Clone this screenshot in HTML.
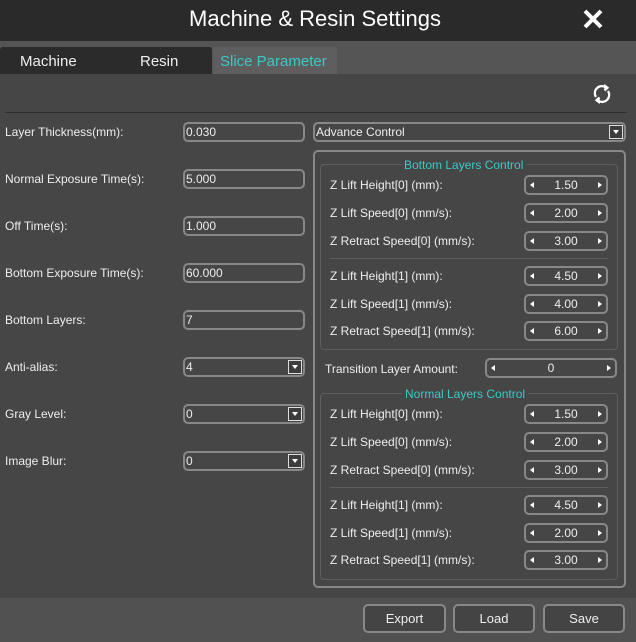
<!DOCTYPE html>
<html><head><meta charset="utf-8"><style>
*{margin:0;padding:0;box-sizing:border-box}
body{width:636px;height:642px;overflow:hidden;background:#464646;font-family:"Liberation Sans",sans-serif;font-size:12px;color:#eee;position:relative}
.a{position:absolute}
.t{position:absolute;white-space:nowrap;line-height:14px}
.inp{position:absolute;border:2px solid #888;border-radius:5px;height:20px;padding-left:1px;line-height:16px}
.dd{position:absolute;width:14px;height:14px;right:1px;top:1px;border:1px solid #ddd;background:#3c3c3c}
.dd:after{content:"";position:absolute;left:3px;top:4px;border-left:3.5px solid transparent;border-right:3.5px solid transparent;border-top:4px solid #fff}
.sp{position:absolute;border:2px solid #888;border-radius:5px;height:20px;text-align:center;line-height:16px}
.sp:before{content:"";position:absolute;left:4px;top:5px;border-top:3px solid transparent;border-bottom:3px solid transparent;border-right:4px solid #fff}
.sp:after{content:"";position:absolute;right:4px;top:5px;border-top:3px solid transparent;border-bottom:3px solid transparent;border-left:4px solid #fff}
.grp{position:absolute;border:1px solid #5e5e5e;border-radius:4px}
.gt{position:absolute;color:#3cc8c8;background:#464646;padding:0 3px;line-height:14px;white-space:nowrap}
.sep{position:absolute;height:1px;background:#5e5e5e}
.btn{position:absolute;top:604px;height:29px;border:2px solid #888;border-radius:5px;background:#444;text-align:center;line-height:25px;font-size:13px}
</style></head><body>
<div class="a" style="left:0;top:0;width:636px;height:41px;background:#2a2a2a"></div>
<div class="t" style="left:0;width:630px;top:6px;text-align:center;font-size:22px;line-height:26px;color:#fff">Machine &amp; Resin Settings</div>
<svg class="a" style="left:582px;top:8px" width="22" height="22"><path d="M3 3L19 19M19 3L3 19" stroke="#fff" stroke-width="4"/></svg>
<div class="a" style="left:0;top:41px;width:636px;height:33px;background:#555"></div>
<div class="a" style="left:0;top:47px;width:212px;height:27px;background:#2b2b2b;border-radius:3px 3px 0 0"></div>
<div class="a" style="left:213px;top:47px;width:64px;height:27px;background:#5e5e5e;border-radius:3px 3px 0 0;width:124px"></div>
<div class="t" style="left:20px;top:54px;font-size:15px;line-height:16px">Machine</div>
<div class="t" style="left:140px;top:54px;font-size:15px;line-height:16px">Resin</div>
<div class="t" style="left:220px;top:54px;font-size:15px;line-height:16px;color:#3cc8c8">Slice Parameter</div>
<svg class="a" style="left:591px;top:83px" width="22" height="22" fill="none" stroke="#fff" stroke-width="2.2"><path d="M5 14A7 7 0 0 1 15 4.5"/><path d="M17 8A7 7 0 0 1 7 17.5"/><path d="M13 2L16.5 4.8L13.5 7.5" fill="#fff"/><path d="M9 20L5.5 17.2L8.5 14.5" fill="#fff"/></svg>
<div class="a" style="left:5px;top:112px;width:622px;height:1px;background:#2e2e2e"></div>

<div class="t" style="left:5px;top:125px">Layer Thickness(mm):</div><div class="inp" style="left:183px;top:122px;width:122px">0.030</div>
<div class="t" style="left:5px;top:172px">Normal Exposure Time(s):</div><div class="inp" style="left:183px;top:169px;width:122px">5.000</div>
<div class="t" style="left:5px;top:219px">Off Time(s):</div><div class="inp" style="left:183px;top:216px;width:122px">1.000</div>
<div class="t" style="left:5px;top:266px">Bottom Exposure Time(s):</div><div class="inp" style="left:183px;top:263px;width:122px">60.000</div>
<div class="t" style="left:5px;top:313px">Bottom Layers:</div><div class="inp" style="left:183px;top:310px;width:122px">7</div>
<div class="t" style="left:5px;top:360px">Anti-alias:</div><div class="inp" style="left:183px;top:357px;width:122px">4<div class="dd"></div></div>
<div class="t" style="left:5px;top:407px">Gray Level:</div><div class="inp" style="left:183px;top:404px;width:122px">0<div class="dd"></div></div>
<div class="t" style="left:5px;top:454px">Image Blur:</div><div class="inp" style="left:183px;top:451px;width:122px">0<div class="dd"></div></div>

<div class="inp" style="left:313px;top:122px;width:313px">Advance Control<div class="dd"></div></div>
<div class="a" style="left:313px;top:150px;width:313px;height:438px;border:2px solid #888;border-radius:5px"></div>

<div class="grp" style="left:320px;top:164px;width:298px;height:186px"></div>
<div class="gt" style="left:401px;top:158px">Bottom Layers Control</div>
<div class="t" style="left:330px;top:178px">Z Lift Height[0] (mm):</div><div class="sp" style="left:524px;top:175px;width:84px">1.50</div>
<div class="t" style="left:330px;top:206px">Z Lift Speed[0] (mm/s):</div><div class="sp" style="left:524px;top:203px;width:84px">2.00</div>
<div class="t" style="left:330px;top:234px">Z Retract Speed[0] (mm/s):</div><div class="sp" style="left:524px;top:231px;width:84px">3.00</div>
<div class="sep" style="left:330px;top:258px;width:278px"></div>
<div class="t" style="left:330px;top:269px">Z Lift Height[1] (mm):</div><div class="sp" style="left:524px;top:266px;width:84px">4.50</div>
<div class="t" style="left:330px;top:297px">Z Lift Speed[1] (mm/s):</div><div class="sp" style="left:524px;top:294px;width:84px">4.00</div>
<div class="t" style="left:330px;top:324px">Z Retract Speed[1] (mm/s):</div><div class="sp" style="left:524px;top:321px;width:84px">6.00</div>

<div class="t" style="left:325px;top:362px">Transition Layer Amount:</div><div class="sp" style="left:485px;top:358px;width:132px">0</div>

<div class="grp" style="left:320px;top:393px;width:298px;height:187px"></div>
<div class="gt" style="left:402px;top:387px">Normal Layers Control</div>
<div class="t" style="left:330px;top:407px">Z Lift Height[0] (mm):</div><div class="sp" style="left:524px;top:404px;width:84px">1.50</div>
<div class="t" style="left:330px;top:435px">Z Lift Speed[0] (mm/s):</div><div class="sp" style="left:524px;top:432px;width:84px">2.00</div>
<div class="t" style="left:330px;top:463px">Z Retract Speed[0] (mm/s):</div><div class="sp" style="left:524px;top:460px;width:84px">3.00</div>
<div class="sep" style="left:330px;top:487px;width:278px"></div>
<div class="t" style="left:330px;top:498px">Z Lift Height[1] (mm):</div><div class="sp" style="left:524px;top:495px;width:84px">4.50</div>
<div class="t" style="left:330px;top:526px">Z Lift Speed[1] (mm/s):</div><div class="sp" style="left:524px;top:523px;width:84px">2.00</div>
<div class="t" style="left:330px;top:553px">Z Retract Speed[1] (mm/s):</div><div class="sp" style="left:524px;top:550px;width:84px">3.00</div>

<div class="a" style="left:0;top:598px;width:636px;height:44px;background:#515151"></div>
<div class="btn" style="left:363px;width:83px">Export</div>
<div class="btn" style="left:453px;width:82px">Load</div>
<div class="btn" style="left:543px;width:82px">Save</div>
</body></html>
